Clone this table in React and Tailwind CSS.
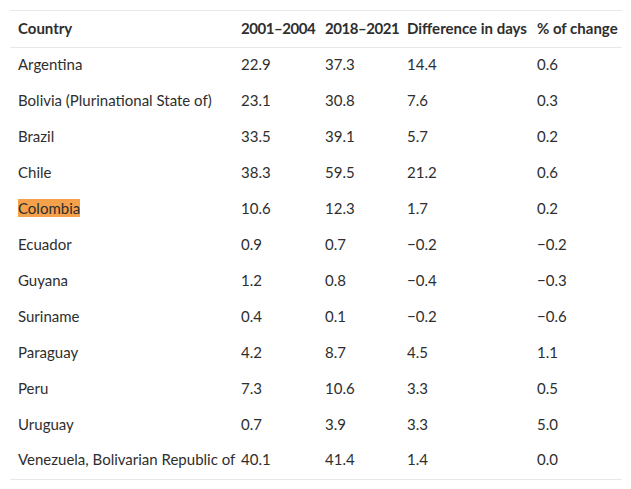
const rows = [
  ["Argentina", "22.9", "37.3", "14.4", "0.6"],
  ["Bolivia (Plurinational State of)", "23.1", "30.8", "7.6", "0.3"],
  ["Brazil", "33.5", "39.1", "5.7", "0.2"],
  ["Chile", "38.3", "59.5", "21.2", "0.6"],
  ["Colombia", "10.6", "12.3", "1.7", "0.2"],
  ["Ecuador", "0.9", "0.7", "−0.2", "−0.2"],
  ["Guyana", "1.2", "0.8", "−0.4", "−0.3"],
  ["Suriname", "0.4", "0.1", "−0.2", "−0.6"],
  ["Paraguay", "4.2", "8.7", "4.5", "1.1"],
  ["Peru", "7.3", "10.6", "3.3", "0.5"],
  ["Uruguay", "0.7", "3.9", "3.3", "5.0"],
  ["Venezuela, Bolivarian Republic of", "40.1", "41.4", "1.4", "0.0"],
];

export default function App() {
  return (
    <div className="h-[489px] w-[631px] bg-white pl-[10px] pt-[10px] font-['Lato',sans-serif] text-[15px] leading-[18px] text-[#2e2e2e]">
      <table className="w-[612px] table-fixed border-collapse border-y border-[#e8e8e8]">
        <colgroup>
          <col className="w-[223px]" />
          <col className="w-[84px]" />
          <col className="w-[82px]" />
          <col className="w-[130px]" />
          <col className="w-[93px]" />
        </colgroup>
        <thead>
          <tr className="h-[37px] border-b border-[#e8e8e8] whitespace-nowrap text-left font-bold">
            <th className="pb-[3px] pl-2">Country</th>
            <th className="pb-[3px] pl-2 tracking-[-0.03em]">2001–2004</th>
            <th className="pb-[3px] pl-2 tracking-[-0.03em]">2018–2021</th>
            <th className="pb-[3px] pl-2">Difference in days</th>
            <th className="pb-[3px] pl-2">% of change</th>
          </tr>
        </thead>
        <tbody>
          {rows.map((r) => (
            <tr key={r[0]} className="h-[36px]">
              {r.map((c, i) => (
                <td key={i} className="whitespace-nowrap pb-[4px] pl-2">
                  {c === "Colombia" ? <span className="bg-[#f5a04a]">{c}</span> : c}
                </td>
              ))}
            </tr>
          ))}
        </tbody>
      </table>
    </div>
  );
}
